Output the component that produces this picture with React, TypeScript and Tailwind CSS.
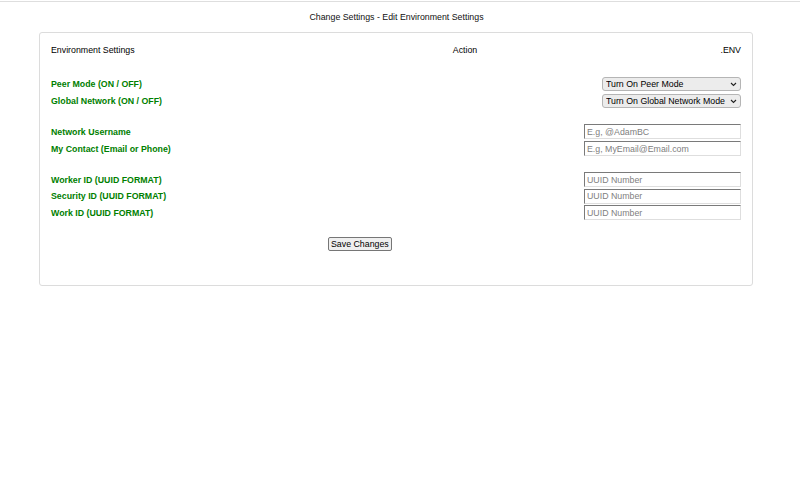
import React from 'react';

const font = { fontFamily: '"Liberation Sans", Arial, sans-serif' };

const Chevron = () => (
  <svg width="7" height="5" viewBox="0 0 7 5" className="absolute right-[4px] top-[5px] pointer-events-none">
    <path d="M1 1l2.5 2.5L6 1" fill="none" stroke="#222" strokeWidth="1.1" />
  </svg>
);

const SelectBox = ({ label }: { label: string }) => (
  <div className="relative w-[139px] h-[14px]">
    <select
      className="appearance-none w-full h-full bg-[#ececec] border border-[#b5b5b5] rounded-[3px] pl-[3px] pr-[12px] text-[8.8px] leading-[12px] text-black"
      defaultValue={label}
    >
      <option>{label}</option>
    </select>
    <Chevron />
  </div>
);

const TextBox = ({ placeholder }: { placeholder: string }) => (
  <input
    placeholder={placeholder}
    className="w-[157px] h-[15px] bg-white border border-t-[#7a7a7a] border-l-[#7a7a7a] border-b-[#dedede] border-r-[#dedede] px-[2px] text-[8.8px] leading-[12px] text-black placeholder:text-[#808080] outline-none"
  />
);

const Row = ({ label, children, h = 'h-[17px]' }: { label: string; children: React.ReactNode; h?: string }) => (
  <div className={`flex items-center justify-between ${h}`}>
    <span className="font-bold text-[#008000]">{label}</span>
    {children}
  </div>
);

export default function App() {
  return (
    <div className="min-h-[481px] bg-white text-[8.8px] leading-[12px] text-black" style={font}>
      <div className="pt-px">
        <div className="border-t border-[#dedede]" />
      </div>

      <div className="mt-[9px] h-[12px] text-center pr-[7px] text-[#111]">
        Change Settings - Edit Environment Settings
      </div>

      {/* settings card */}
      <div className="mt-[9px] ml-[39px] w-[714px] h-[254px] border border-[#dcdcdc] rounded-[3px] px-[11px] pt-[11px]">
        <div className="flex h-[12px]">
          <span className="w-[349px]">Environment Settings</span>
          <span className="w-[130px] text-center">Action</span>
          <span className="flex-1 text-right">.ENV</span>
        </div>

        <div className="mt-[19px]">
          <Row label="Peer Mode (ON / OFF)">
            <SelectBox label="Turn On Peer Mode" />
          </Row>
          <Row label="Global Network (ON / OFF)">
            <SelectBox label="Turn On Global Network Mode" />
          </Row>
        </div>

        <div className="mt-[14px]">
          <Row label="Network Username">
            <TextBox placeholder="E.g, @AdamBC" />
          </Row>
          <Row label="My Contact (Email or Phone)">
            <TextBox placeholder="E.g, MyEmail@Email.com" />
          </Row>
        </div>

        <div className="mt-[14px]">
          <Row label="Worker ID (UUID FORMAT)">
            <TextBox placeholder="UUID Number" />
          </Row>
          <Row label="Security ID (UUID FORMAT)" h="h-[16px]">
            <TextBox placeholder="UUID Number" />
          </Row>
          <Row label="Work ID (UUID FORMAT)">
            <TextBox placeholder="UUID Number" />
          </Row>
        </div>

        <div className="mt-[16px] pl-[277px]">
          <button className="h-[14px] px-[2px] bg-[#efefef] border border-[#767676] rounded-[2px] text-[8.8px] leading-[11px] text-black">
            Save Changes
          </button>
        </div>
      </div>
    </div>
  );
}
